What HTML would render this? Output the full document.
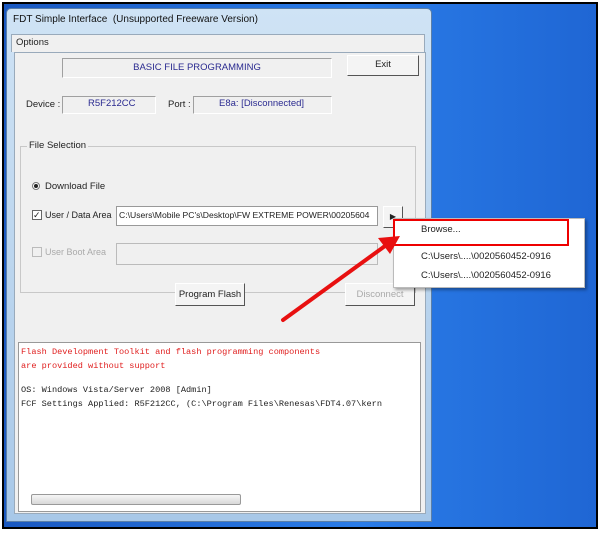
<!DOCTYPE html>
<html><head><style>
*{margin:0;padding:0;box-sizing:border-box}
body{width:602px;height:536px;background:#fff;position:relative;overflow:hidden;font-family:"Liberation Sans",sans-serif;font-size:9.5px;color:#222}
.a{position:absolute}
.frame{left:2px;top:2px;width:596px;height:527px;border:2px solid #000;background:linear-gradient(90deg,#1a58c0,#2a7ce8 60%,#1f66d4)}
.win{left:6px;top:8px;width:426px;height:514px;background:linear-gradient(#cfe3f5,#a8c8e8);border:1px solid #5b7fa8;border-radius:5px 5px 0 0}
.client{left:14px;top:52px;width:412px;height:462px;background:#f0f0f0;border:1px solid #9ab}
.inset{border:1px solid;border-color:#a0a0a0 #fff #fff #a0a0a0}
.btn{background:#f4f4f4;border:1px solid;border-color:#fff #555 #555 #fff;text-align:center;white-space:nowrap}
.mono{font-family:"Liberation Mono",monospace;font-size:9px}
</style></head><body>
<div class="a frame"></div>
<div class="a win"></div>
<div class="a" style="left:13px;top:14px;font-size:10px;color:#111">FDT Simple Interface &nbsp;(Unsupported Freeware Version)</div>
<div class="a" style="left:11px;top:34px;width:414px;height:18px;background:#f0f0f0;border:1px solid #9ab;border-bottom:none"></div>
<div class="a" style="left:16px;top:37px">Options</div>
<div class="a client"></div>
<div class="a inset" style="left:62px;top:58px;width:270px;height:20px;text-align:center;line-height:18px;color:#2a2a90">BASIC FILE PROGRAMMING</div>
<div class="a btn" style="left:347px;top:55px;width:72px;height:21px;line-height:18px">Exit</div>
<div class="a" style="left:26px;top:99px">Device :</div>
<div class="a inset" style="left:62px;top:96px;width:94px;height:18px;color:#2a2a90;padding-left:25px;line-height:14px">R5F212CC</div>
<div class="a" style="left:168px;top:99px">Port :</div>
<div class="a inset" style="left:193px;top:96px;width:139px;height:18px;color:#2a2a90;padding-left:25px;line-height:14px">E8a: [Disconnected]</div>
<div class="a" style="left:20px;top:146px;width:396px;height:147px;border:1px solid #c8c8c8"></div>
<div class="a" style="left:27px;top:140px;background:#f0f0f0;padding:0 2px">File Selection</div>
<div class="a" style="left:32px;top:182px;width:8px;height:8px;border-radius:50%;border:1px solid #777;background:#fff"><div class="a" style="left:1px;top:1px;width:4px;height:4px;border-radius:50%;background:#222"></div></div>
<div class="a" style="left:45px;top:181px">Download File</div>
<div class="a" style="left:32px;top:210px;width:10px;height:10px;border:1px solid #666;background:#fff;font-size:9px;line-height:8px">✓</div>
<div class="a" style="left:45px;top:210px;font-size:9px">User / Data Area</div>
<div class="a" style="left:116px;top:206px;width:262px;height:20px;background:#fff;border:1px solid #999;padding:3px 2px;white-space:nowrap;overflow:hidden;font-size:8.6px">C:\Users\Mobile PC's\Desktop\FW EXTREME POWER\00205604</div>
<div class="a btn" style="left:383px;top:206px;width:20px;height:22px;font-size:8px;line-height:20px">▶</div>
<div class="a" style="left:32px;top:247px;width:10px;height:10px;border:1px solid #bbb"></div>
<div class="a" style="left:45px;top:247px;color:#aaa;font-size:9px">User Boot Area</div>
<div class="a" style="left:116px;top:243px;width:262px;height:22px;border:1px solid #bbb"></div>
<div class="a btn" style="left:175px;top:283px;width:70px;height:23px;line-height:21px">Program Flash</div>
<div class="a btn" style="left:345px;top:283px;width:70px;height:23px;line-height:21px;color:#aaa">Disconnect</div>
<div class="a" style="left:18px;top:342px;width:403px;height:170px;background:#fff;border:1px solid #999"></div>
<div class="a mono" style="left:21px;top:345px;color:#e02020;line-height:14px;font-size:8.6px">Flash Development Toolkit and flash programming components<br>are provided without support</div>
<div class="a mono" style="left:21px;top:383px;line-height:14px;white-space:nowrap;width:395px;overflow:hidden;font-size:8.6px">OS: Windows Vista/Server 2008 [Admin]<br>FCF Settings Applied: R5F212CC, (C:\Program Files\Renesas\FDT4.07\kern</div>
<div class="a" style="left:31px;top:494px;width:210px;height:11px;background:linear-gradient(#f6f6f6,#d8d8d8);border:1px solid #999;border-radius:2px"></div>
<div class="a" style="left:393px;top:218px;width:192px;height:70px;background:#fff;border:1px solid #bbb;box-shadow:2px 2px 3px rgba(0,0,0,.35)"></div>
<div class="a" style="left:393px;top:219px;width:176px;height:27px;border:2px solid #e00"></div>
<div class="a" style="left:421px;top:224px">Browse...</div>
<div class="a" style="left:421px;top:251px">C:\Users\....\0020560452-0916</div>
<div class="a" style="left:421px;top:270px">C:\Users\....\0020560452-0916</div>
<svg class="a" style="left:0;top:0" width="602" height="536"><line x1="283" y1="320" x2="385" y2="246" stroke="#e81010" stroke-width="4" stroke-linecap="round"/><polygon points="400,236 378,238 390,254" fill="#e81010"/></svg>
</body></html>
